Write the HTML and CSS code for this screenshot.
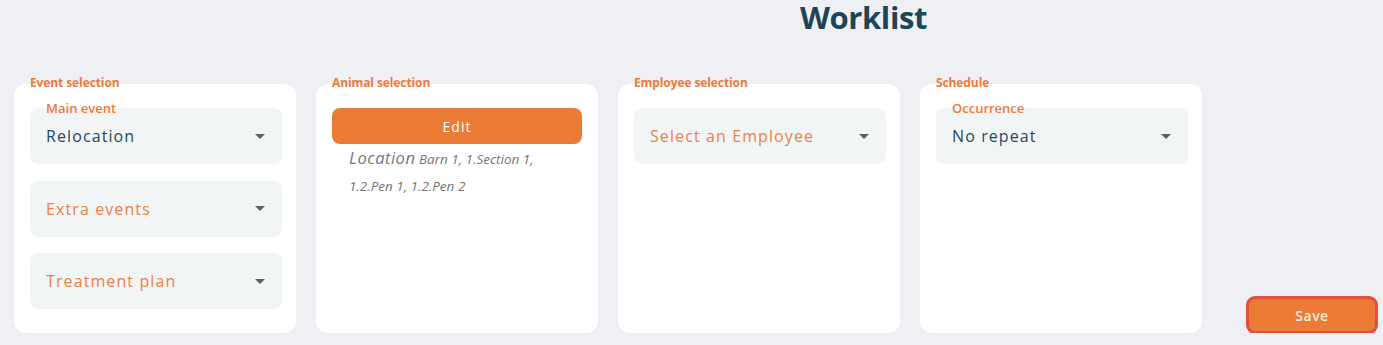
FILE: index.html
```html
<!DOCTYPE html>
<html lang="en">
<head>
<meta charset="utf-8">
<title>Worklist</title>
<link rel="stylesheet" href="styles.css">
</head>
<body>
<header class="header">
  <h1 class="title">Worklist</h1>
</header>
<main class="row">
  <section class="card">
    <span class="card-label">Event selection</span>
    <div class="field">
      <span class="field-label">Main event</span>
      <span class="field-value">Relocation</span>
      <span class="caret"></span>
    </div>
    <div class="field">
      <span class="field-placeholder">Extra events</span>
      <span class="caret"></span>
    </div>
    <div class="field">
      <span class="field-placeholder">Treatment plan</span>
      <span class="caret"></span>
    </div>
  </section>
  <section class="card card-animals">
    <span class="card-label">Animal selection</span>
    <button class="btn-edit" type="button">Edit</button>
    <p class="location"><span class="loc-key">Location</span> Barn 1, 1.Section 1, 1.2.Pen 1, 1.2.Pen 2</p>
  </section>
  <section class="card">
    <span class="card-label">Employee selection</span>
    <div class="field">
      <span class="field-placeholder">Select an Employee</span>
      <span class="caret"></span>
    </div>
  </section>
  <section class="card">
    <span class="card-label">Schedule</span>
    <div class="field">
      <span class="field-label">Occurrence</span>
      <span class="field-value">No repeat</span>
      <span class="caret"></span>
    </div>
  </section>
  <div class="actions">
    <button class="btn-save" type="button">Save</button>
  </div>
</main>
</body>
</html>
```

FILE: styles.css
```css
* { box-sizing: border-box; }

html, body {
  margin: 0;
  padding: 0;
  background: #eff0f4;
  font-family: "Open Sans", "Noto Sans", sans-serif;
}

.header {
  height: 50px;
  padding-left: 800px;
  padding-top: 2px;
}

.title {
  margin: 0;
  font-size: 31px;
  line-height: 30px;
  font-weight: 700;
  color: #1c4657;
  letter-spacing: -0.4px;
}

.row {
  display: flex;
  align-items: stretch;
  gap: 20px;
  padding: 34px 5px 0 14px;
}

.card {
  position: relative;
  width: 282px;
  height: 249px;
  background: #ffffff;
  border-radius: 12px;
  padding: 24px 14px 25px 16px;
  display: flex;
  flex-direction: column;
  gap: 16.5px;
}

.card-animals { gap: 0; }

.card-label {
  position: absolute;
  top: -8px;
  left: 16px;
  font-size: 12px;
  line-height: 14px;
  font-weight: 700;
  color: #ee7a3a;
  letter-spacing: -0.1px;
}

.field {
  position: relative;
  height: 56px;
  flex: none;
  background: #f2f5f6;
  border-radius: 8px;
  display: flex;
  align-items: center;
  padding: 0 16px;
}

.field-label {
  position: absolute;
  top: -7px;
  left: 16px;
  font-size: 13px;
  line-height: 15px;
  font-weight: 600;
  color: #ee7a3a;
}

.field-value,
.field-placeholder {
  flex: 1;
  font-size: 16px;
  letter-spacing: 1.1px;
  line-height: 20px;
}

.field-value { color: #1f4a5c; }
.field-placeholder { color: #ee7f45; }

.caret {
  width: 0;
  height: 0;
  margin-right: 1px;
  border-left: 5px solid transparent;
  border-right: 5px solid transparent;
  border-top: 5px solid #5f5f5f;
}

.btn-edit {
  flex: none;
  height: 36px;
  width: 250px;
  border: none;
  border-radius: 8px;
  background: #ec7b35;
  color: #ffffff;
  font-family: inherit;
  font-size: 14px;
  font-weight: 500;
  letter-spacing: 1px;
}

.location {
  margin: 0;
  padding: 0 32px 0 17px;
  font-style: italic;
  font-size: 13.5px;
  line-height: 27px;
  color: #767676;
}

.loc-key {
  font-size: 16.5px;
  letter-spacing: 0.5px;
}

.actions {
  margin-left: auto;
  display: flex;
  align-items: flex-end;
}

.btn-save {
  width: 132px;
  height: 38px;
  margin-bottom: -1px;
  border: 3px solid #e24f3b;
  border-radius: 9px;
  background: #ec7b35;
  color: #fdeadf;
  font-family: inherit;
  font-size: 14px;
  font-weight: 600;
  letter-spacing: 0.5px;
}
```
